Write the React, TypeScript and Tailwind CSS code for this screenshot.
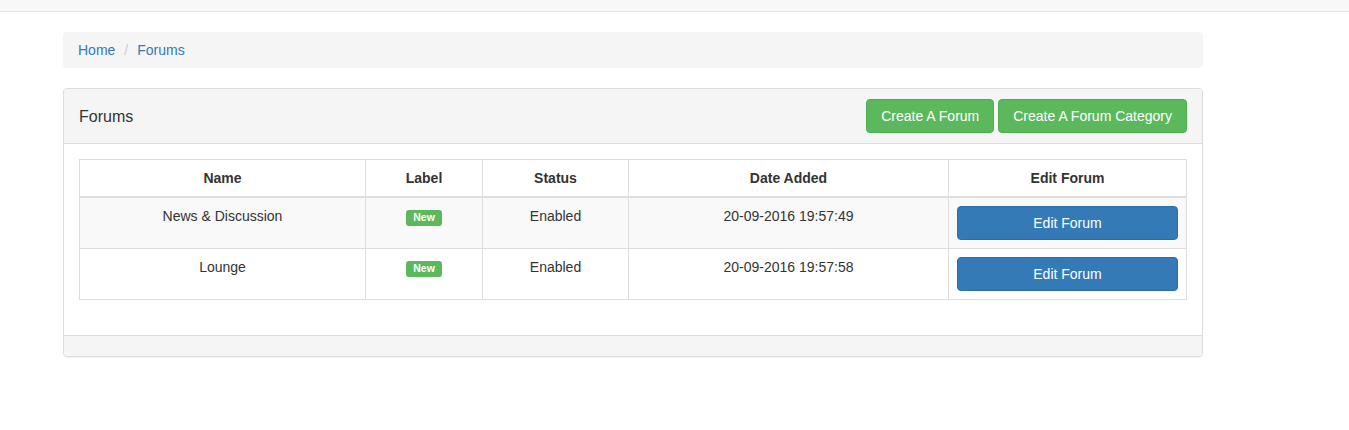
import React from "react";

const forums = [
  { name: "News & Discussion", label: "New", status: "Enabled", added: "20-09-2016 19:57:49" },
  { name: "Lounge", label: "New", status: "Enabled", added: "20-09-2016 19:57:58" },
];

const App: React.FC = () => {
  return (
    <div
      className="min-h-[430px] bg-white text-[14px] leading-[20px] text-[#333]"
      style={{ fontFamily: '"Liberation Sans", Arial, sans-serif' }}
    >
      {/* Navbar strip */}
      <div className="h-[12px] bg-[#f8f8f8] border-b border-[#e7e7e7]" />

      <div className="ml-[63px] w-[1140px] pt-[20px]">
        {/* Breadcrumb */}
        <div className="flex items-center h-[36px] px-[15px] mb-[20px] rounded-[4px] bg-[#f5f5f5]">
          <a className="text-[#337ab7]">Home</a>
          <span className="pl-[9px] pr-[9px] text-[#ccc]">/</span>
          <a className="text-[#337ab7]">Forums</a>
        </div>

        {/* Panel */}
        <div className="rounded-[4px] border border-[#ddd] bg-white shadow-[0_1px_1px_rgba(0,0,0,0.05)]">
          <div className="flex items-center justify-between px-[15px] py-[10px] bg-[#f5f5f5] border-b border-[#ddd] rounded-t-[3px]">
            <span className="text-[16px] mt-[2px]">Forums</span>
            <div className="flex gap-[4px]">
              <button className="h-[34px] px-[14px] rounded-[4px] border border-[#4cae4c] bg-[#5cb85c] text-white">
                Create A Forum
              </button>
              <button className="h-[34px] px-[14px] rounded-[4px] border border-[#4cae4c] bg-[#5cb85c] text-white">
                Create A Forum Category
              </button>
            </div>
          </div>

          <div className="p-[15px]">
            <table className="w-[1107px] table-fixed border-collapse border border-[#ddd] mb-[20px]">
              <colgroup>
                <col className="w-[286px]" />
                <col className="w-[117px]" />
                <col className="w-[146px]" />
                <col className="w-[320px]" />
                <col className="w-[238px]" />
              </colgroup>
              <thead>
                <tr>
                  {["Name", "Label", "Status", "Date Added", "Edit Forum"].map((h) => (
                    <th
                      key={h}
                      className="p-[8px] font-bold text-center align-bottom border border-[#ddd] border-b-2"
                    >
                      {h}
                    </th>
                  ))}
                </tr>
              </thead>
              <tbody>
                {forums.map((f, i) => (
                  <tr key={f.name} className={i % 2 === 0 ? "bg-[#f9f9f9]" : "bg-white"}>
                    <td className="p-[8px] text-center align-top border border-[#ddd]">{f.name}</td>
                    <td className="p-[8px] text-center align-top border border-[#ddd]">
                      <span className="inline-block mt-[3px] px-[7px] pt-[2px] pb-[3px] rounded-[3px] bg-[#5cb85c] text-white text-[10.5px] leading-none font-bold">
                        {f.label}
                      </span>
                    </td>
                    <td className="p-[8px] text-center align-top border border-[#ddd]">{f.status}</td>
                    <td className="p-[8px] text-center align-top border border-[#ddd]">{f.added}</td>
                    <td className="p-[8px] text-center align-top border border-[#ddd]">
                      <button className="block w-full h-[34px] rounded-[4px] border border-[#2e6da4] bg-[#337ab7] text-white">
                        Edit Forum
                      </button>
                    </td>
                  </tr>
                ))}
              </tbody>
            </table>
          </div>

          <div className="h-[21px] bg-[#f5f5f5] border-t border-[#ddd] rounded-b-[3px]" />
        </div>
      </div>
    </div>
  );
};

export default App;
